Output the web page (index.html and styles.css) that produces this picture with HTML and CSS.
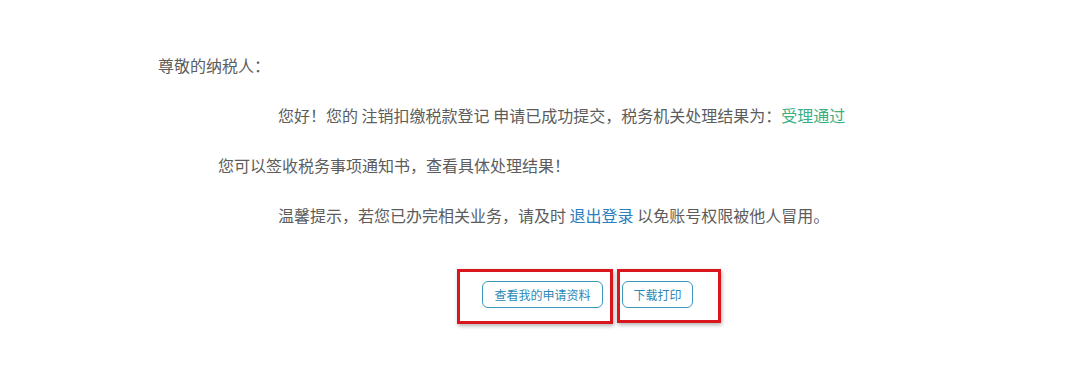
FILE: index.html
```html
<!DOCTYPE html>
<html lang="zh-CN">
<head>
<meta charset="utf-8">
<title>受理结果</title>
<link rel="stylesheet" href="styles.css">
</head>
<body>
<main class="page">
  <section class="notice">
    <p class="line">尊敬的纳税人：</p>
    <p class="line indent-2">您好！您的 注销扣缴税款登记 申请已成功提交，税务机关处理结果为：<span class="ok">受理通过</span></p>
    <p class="line indent-1">您可以签收税务事项通知书，查看具体处理结果！</p>
    <p class="line indent-2">温馨提示，若您已办完相关业务，请及时 <a class="link" href="#">退出登录</a> 以免账号权限被他人冒用。</p>
    <div class="actions">
      <div class="mark mark-a"><button class="btn btn-a" type="button">查看我的申请资料</button></div>
      <div class="mark mark-b"><button class="btn btn-b" type="button">下载打印</button></div>
    </div>
  </section>
</main>
</body>
</html>
```
FILE: styles.css
```css
html, body {
  margin: 0;
  padding: 0;
  background: #ffffff;
}
body {
  width: 1076px;
  height: 373px;
  overflow: hidden;
  font-family: "Noto Sans CJK SC", "Microsoft YaHei", "Noto Sans", sans-serif;
  color: #5c5c5c;
}
.page {
  padding: 40px 0 0 158px;
}
.notice {
  display: flex;
  flex-direction: column;
}
.line {
  margin: 0;
  font-size: 16px;
  line-height: 50px;
  height: 50px;
  white-space: nowrap;
}
.indent-1 { padding-left: 60px; }
.indent-2 { padding-left: 120px; }
.ok { color: #3aaf80; }
.link {
  color: #2b7fc0;
  text-decoration: none;
}
.actions {
  display: flex;
  gap: 4px;
  margin: 29px 0 0 299px;
}
.mark {
  box-sizing: border-box;
  border: 3px solid #d8161b;
  box-shadow: 1px 2px 4px rgba(0, 0, 0, 0.3);
  display: flex;
  align-items: flex-start;
}
.mark-a {
  width: 156px;
  height: 55px;
  padding: 9px 0 0 22px;
}
.mark-b {
  width: 104px;
  height: 54px;
  padding: 9px 0 0 2px;
}
.btn {
  font-family: "Noto Sans CJK SC", "Microsoft YaHei", sans-serif;
  font-size: 12px;
  color: #2a89b8;
  background: #ffffff;
  border: 1px solid #3b9abc;
  border-radius: 6px;
  height: 27px;
  line-height: 25px;
  padding: 0;
  cursor: pointer;
}
.btn-a { width: 121px; }
.btn-b { width: 71px; }
```
